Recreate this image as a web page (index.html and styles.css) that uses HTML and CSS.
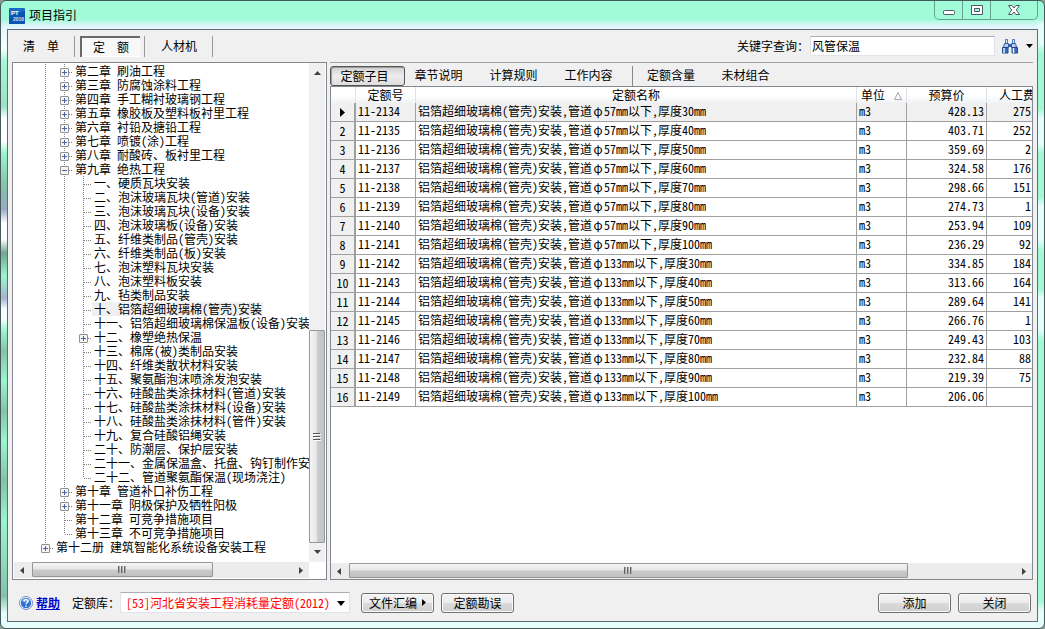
FILE: index.html
```
<!DOCTYPE html>
<html lang="zh-CN">
<head>
<meta charset="utf-8">
<title>项目指引</title>
<link rel="stylesheet" href="styles.css">
</head>
<body>
<div class="window">
  <header class="titlebar">
    <svg class="app-icon" width="16" height="16" viewBox="0 0 16 16" aria-hidden="true">
      <rect width="16" height="16" rx="1" fill="#1769c4"/>
      <path d="M0 16V8L16 3V15a1 1 0 0 1-1 1Z" fill="#0c55ae"/>
      <text x="2" y="7" class="icon-pt">PT</text>
      <text x="4" y="13" class="icon-year">2016</text>
    </svg>
    <h1>项目指引</h1>
    <div class="window-buttons">
      <button type="button" aria-label="最小化"><svg width="14" height="14" viewBox="0 0 14 14"><rect x="1.500" y="7.500" width="11" height="4" rx="1" fill="#fff" stroke="#535666"/></svg></button>
      <button type="button" aria-label="最大化"><svg width="14" height="14" viewBox="0 0 14 14"><path d="M1.500 2.500h11v9h-11ZM4.500 5.500h5v3h-5Z" fill="#fff" fill-rule="evenodd" stroke="#535666"/></svg></button>
      <button type="button" class="close" aria-label="关闭窗口"><svg width="14" height="14" viewBox="0 0 14 14"><path d="M1.500 2.500h3.500l2 2.500 2-2.500h3.500l-3.200 4.500 3.200 4.500H9L7 9l-2 2.500H1.500L4.700 7Z" fill="#fff" stroke="#535666"/></svg></button>
    </div>
  </header>

  <main class="client">
    <div class="toolbar">
      <nav class="modes">
        <button type="button" class="mode">清&emsp;&emsp;单</button>
        <button type="button" class="mode pressed">定&emsp;&emsp;额</button>
        <button type="button" class="mode">人材机</button>
      </nav>
      <form class="search">
        <label for="keyword">关键字查询：</label>
        <input id="keyword" type="text" value="风管保温">
        <button type="button" class="find" aria-label="查询">
          <svg width="16" height="15" viewBox="0 0 16 15"><path d="M3.500.5h2v4h-2ZM10.500.5h2v4h-2Z" fill="#d8e6fa" stroke="#4d7cc0"/><path d="M2.500 4.500h4v4h-5ZM9.500 4.500h4l1 4h-5Z" fill="#b5cef2" stroke="#2f5da8"/><path d="M6 5h4v3H6Z" fill="#2f5da8"/><path d="M.5 8.500h5.500v5.500H.5ZM10 8.500h5.500v5.500H10Z" fill="#3a6cba" stroke="#1f4388"/><path d="M2 9v5M11.500 9v5" stroke="#e8f1ff" stroke-width="1.500"/></svg>
          <svg width="7" height="4" viewBox="0 0 7 4"><path d="M0 0h7L3.500 4Z"/></svg>
        </button>
      </form>
    </div>

    <div class="panes">
      <section class="tree-pane">
        <div class="tree-body">
          <ul class="tree">
            <li>
              <ul>
                <li><div class="row"><button type="button" class="knob plus" aria-label="展开"></button><span>第二章 刷油工程</span></div></li>
                <li><div class="row"><button type="button" class="knob plus" aria-label="展开"></button><span>第三章 防腐蚀涂料工程</span></div></li>
                <li><div class="row"><button type="button" class="knob plus" aria-label="展开"></button><span>第四章 手工糊衬玻璃钢工程</span></div></li>
                <li><div class="row"><button type="button" class="knob plus" aria-label="展开"></button><span>第五章 橡胶板及塑料板衬里工程</span></div></li>
                <li><div class="row"><button type="button" class="knob plus" aria-label="展开"></button><span>第六章 衬铅及搪铅工程</span></div></li>
                <li><div class="row"><button type="button" class="knob plus" aria-label="展开"></button><span>第七章 喷镀(涂)工程</span></div></li>
                <li><div class="row"><button type="button" class="knob plus" aria-label="展开"></button><span>第八章 耐酸砖、板衬里工程</span></div></li>
                <li><div class="row"><button type="button" class="knob" aria-label="折叠"></button><span>第九章 绝热工程</span></div>
                  <ul>
                    <li><div class="row"><span>一、硬质瓦块安装</span></div></li>
                    <li><div class="row"><span>二、泡沫玻璃瓦块(管道)安装</span></div></li>
                    <li><div class="row"><span>三、泡沫玻璃瓦块(设备)安装</span></div></li>
                    <li><div class="row"><span>四、泡沫玻璃板(设备)安装</span></div></li>
                    <li><div class="row"><span>五、纤维类制品(管壳)安装</span></div></li>
                    <li><div class="row"><span>六、纤维类制品(板)安装</span></div></li>
                    <li><div class="row"><span>七、泡沫塑料瓦块安装</span></div></li>
                    <li><div class="row"><span>八、泡沫塑料板安装</span></div></li>
                    <li><div class="row"><span>九、毡类制品安装</span></div></li>
                    <li><div class="row"><span class="selected">十、铝箔超细玻璃棉(管壳)安装</span></div></li>
                    <li><div class="row"><span>十一、铝箔超细玻璃棉保温板(设备)安装</span></div></li>
                    <li><div class="row"><button type="button" class="knob plus" aria-label="展开"></button><span>十二、橡塑绝热保温</span></div></li>
                    <li><div class="row"><span>十三、棉席(被)类制品安装</span></div></li>
                    <li><div class="row"><span>十四、纤维类散状材料安装</span></div></li>
                    <li><div class="row"><span>十五、聚氨酯泡沫喷涂发泡安装</span></div></li>
                    <li><div class="row"><span>十六、硅酸盐类涂抹材料(管道)安装</span></div></li>
                    <li><div class="row"><span>十七、硅酸盐类涂抹材料(设备)安装</span></div></li>
                    <li><div class="row"><span>十八、硅酸盐类涂抹材料(管件)安装</span></div></li>
                    <li><div class="row"><span>十九、复合硅酸铝绳安装</span></div></li>
                    <li><div class="row"><span>二十、防潮层、保护层安装</span></div></li>
                    <li><div class="row"><span>二十一、金属保温盒、托盘、钩钉制作安装</span></div></li>
                    <li><div class="row"><span>二十二、管道聚氨酯保温(现场浇注)</span></div></li>
                  </ul>
                </li>
                <li><div class="row"><button type="button" class="knob plus" aria-label="展开"></button><span>第十章 管道补口补伤工程</span></div></li>
                <li><div class="row"><button type="button" class="knob plus" aria-label="展开"></button><span>第十一章 阴极保护及牺牲阳极</span></div></li>
                <li><div class="row"><span>第十二章 可竞争措施项目</span></div></li>
                <li><div class="row"><span>第十三章 不可竞争措施项目</span></div></li>
              </ul>
            </li>
            <li><div class="row"><button type="button" class="knob plus" aria-label="展开"></button><span>第十二册 建筑智能化系统设备安装工程</span></div></li>
          </ul>
          <div class="vscroll">
            <svg width="7" height="4" viewBox="0 0 7 4"><path d="M0 4h7L3.500 0Z" fill="#404040"/></svg>
            <div class="vtrack"><div class="vthumb"><svg width="8" height="8" viewBox="0 0 8 8"><path d="M0 .5h7M0 3.500h7M0 6.500h7" stroke="#555"/><path d="M1 1.500h7M1 4.500h7M1 7.500h7" stroke="#fff"/></svg></div></div>
            <svg width="7" height="4" viewBox="0 0 7 4"><path d="M0 0h7L3.500 4Z" fill="#404040"/></svg>
          </div>
        </div>
        <div class="hscroll inset">
          <svg width="4" height="7" viewBox="0 0 4 7"><path d="M4 0v7L0 3.500Z" fill="#404040"/></svg>
          <div class="htrack"><div class="hthumb tree-thumb"><svg width="9" height="7" viewBox="0 0 9 7"><path d="M.5 0v7M3.500 0v7M6.500 0v7" stroke="#666"/><path d="M1.500 0v7M4.500 0v7M7.500 0v7" stroke="#aaa"/></svg></div></div>
          <svg width="4" height="7" viewBox="0 0 4 7"><path d="M0 0v7L4 3.500Z" fill="#404040"/></svg>
        </div>
      </section>

      <section class="detail">
        <nav class="tabs">
          <button type="button" class="tab active">定额子目</button>
          <button type="button" class="tab">章节说明</button>
          <button type="button" class="tab">计算规则</button>
          <button type="button" class="tab">工作内容</button>
          <button type="button" class="tab divided">定额含量</button>
          <button type="button" class="tab">未材组合</button>
        </nav>
        <div class="grid">
          <div class="grid-body">
            <table>
              <colgroup><col class="c-index"><col class="c-code"><col><col class="c-unit"><col class="c-price"><col class="c-labor"></colgroup>
              <thead><tr><th></th><th>定额号</th><th>定额名称</th><th class="sorted">单位<svg width="8" height="8" viewBox="0 0 8 8"><path d="M.5 7.500h7L4 .5Z" fill="none" stroke="#aaa"/></svg></th><th>预算价</th><th class="cut">人工费</th></tr></thead>
              <tbody>
                <tr class="current"><th><svg width="5" height="9" viewBox="0 0 5 9"><path d="M0 0v9L5 4.500Z"/></svg></th><td>11-2134</td><td>铝箔超细玻璃棉(管壳)安装,管道<span class="dia">φ</span>57mm以下,厚度30mm</td><td>m3</td><td>428.13</td><td>275</td></tr>
                <tr><th>2</th><td>11-2135</td><td>铝箔超细玻璃棉(管壳)安装,管道<span class="dia">φ</span>57mm以下,厚度40mm</td><td>m3</td><td>403.71</td><td>252</td></tr>
                <tr><th>3</th><td>11-2136</td><td>铝箔超细玻璃棉(管壳)安装,管道<span class="dia">φ</span>57mm以下,厚度50mm</td><td>m3</td><td>359.69</td><td>2</td></tr>
                <tr><th>4</th><td>11-2137</td><td>铝箔超细玻璃棉(管壳)安装,管道<span class="dia">φ</span>57mm以下,厚度60mm</td><td>m3</td><td>324.58</td><td>176</td></tr>
                <tr><th>5</th><td>11-2138</td><td>铝箔超细玻璃棉(管壳)安装,管道<span class="dia">φ</span>57mm以下,厚度70mm</td><td>m3</td><td>298.66</td><td>151</td></tr>
                <tr><th>6</th><td>11-2139</td><td>铝箔超细玻璃棉(管壳)安装,管道<span class="dia">φ</span>57mm以下,厚度80mm</td><td>m3</td><td>274.73</td><td>1</td></tr>
                <tr><th>7</th><td>11-2140</td><td>铝箔超细玻璃棉(管壳)安装,管道<span class="dia">φ</span>57mm以下,厚度90mm</td><td>m3</td><td>253.94</td><td>109</td></tr>
                <tr><th>8</th><td>11-2141</td><td>铝箔超细玻璃棉(管壳)安装,管道<span class="dia">φ</span>57mm以下,厚度100mm</td><td>m3</td><td>236.29</td><td>92</td></tr>
                <tr><th>9</th><td>11-2142</td><td>铝箔超细玻璃棉(管壳)安装,管道<span class="dia">φ</span>133mm以下,厚度30mm</td><td>m3</td><td>334.85</td><td>184</td></tr>
                <tr><th>10</th><td>11-2143</td><td>铝箔超细玻璃棉(管壳)安装,管道<span class="dia">φ</span>133mm以下,厚度40mm</td><td>m3</td><td>313.66</td><td>164</td></tr>
                <tr><th>11</th><td>11-2144</td><td>铝箔超细玻璃棉(管壳)安装,管道<span class="dia">φ</span>133mm以下,厚度50mm</td><td>m3</td><td>289.64</td><td>141</td></tr>
                <tr><th>12</th><td>11-2145</td><td>铝箔超细玻璃棉(管壳)安装,管道<span class="dia">φ</span>133mm以下,厚度60mm</td><td>m3</td><td>266.76</td><td>1</td></tr>
                <tr><th>13</th><td>11-2146</td><td>铝箔超细玻璃棉(管壳)安装,管道<span class="dia">φ</span>133mm以下,厚度70mm</td><td>m3</td><td>249.43</td><td>103</td></tr>
                <tr><th>14</th><td>11-2147</td><td>铝箔超细玻璃棉(管壳)安装,管道<span class="dia">φ</span>133mm以下,厚度80mm</td><td>m3</td><td>232.84</td><td>88</td></tr>
                <tr><th>15</th><td>11-2148</td><td>铝箔超细玻璃棉(管壳)安装,管道<span class="dia">φ</span>133mm以下,厚度90mm</td><td>m3</td><td>219.39</td><td>75</td></tr>
                <tr><th>16</th><td>11-2149</td><td>铝箔超细玻璃棉(管壳)安装,管道<span class="dia">φ</span>133mm以下,厚度100mm</td><td>m3</td><td>206.06</td><td></td></tr>
              </tbody>
            </table>
          </div>
          <div class="hscroll">
            <svg width="4" height="7" viewBox="0 0 4 7"><path d="M4 0v7L0 3.500Z" fill="#404040"/></svg>
            <div class="htrack"><div class="hthumb grid-thumb"><svg width="9" height="7" viewBox="0 0 9 7"><path d="M.5 0v7M3.500 0v7M6.500 0v7" stroke="#666"/><path d="M1.500 0v7M4.500 0v7M7.500 0v7" stroke="#aaa"/></svg></div></div>
            <svg width="4" height="7" viewBox="0 0 4 7"><path d="M0 0v7L4 3.500Z" fill="#404040"/></svg>
          </div>
        </div>
      </section>
    </div>

    <footer class="footer">
      <a class="help" href="#help"><svg width="14" height="14" viewBox="0 0 14 14"><circle cx="7" cy="7" r="6.500" fill="#fff" stroke="#6f8fc4"/><circle cx="7" cy="7" r="5.200" fill="#2f6fd6"/><path d="M3 5a4.300 4.300 0 0 1 8 0Q7 7.500 3 5" fill="#6fa2ee"/><path d="M5 5.500C5 3 9 3 9 5.300 9 6.700 7 6.700 7 8.300M7 9.600V11" fill="none" stroke="#fff" stroke-width="1.400"/></svg><span>帮助</span></a>
      <label for="library">定额库：</label>
      <div class="library">
        <select id="library"><option>[53]河北省安装工程消耗量定额(2012)</option></select>
        <svg width="8" height="5" viewBox="0 0 8 5"><path d="M0 0h8L4 5Z"/></svg>
      </div>
      <button type="button" class="push first">文件汇编<svg width="4" height="7" viewBox="0 0 4 7"><path d="M0 0v7L4 3.500Z"/></svg></button>
      <button type="button" class="push">定额勘误</button>
      <button type="button" class="push right">添加</button>
      <button type="button" class="push">关闭</button>
    </footer>
  </main>
</div>
</body>
</html>
```
FILE: styles.css
```
* { box-sizing: border-box; }
html, body { height: 100%; }
body {
  margin: 0;
  background: #8a9c96;
  color: #000;
  font: 12px/14px "Noto Sans CJK SC", sans-serif;
  font-feature-settings: "hwid";
}
button, input, select {
  font: inherit;
  font-feature-settings: inherit;
  color: inherit;
  margin: 0;
  padding: 0;
  border: 0;
  background: none;
  border-radius: 0;
}
svg { display: block; flex: none; }
ul { list-style: none; margin: 0; padding: 0; }

.window {
  height: 100%;
  display: flex;
  flex-direction: column;
  padding: 0 6px 6px;
  border: 1px solid #46585a;
  border-radius: 6px;
  overflow: hidden;
  background:
    linear-gradient(transparent 0 18px, #e6fdfd 26px 42px, #a4f8d4 52px 108px, #e6fdfd 117px 143px, #a4f8d4 152px 196px, #e6fdfd 205px 238px, #a4f8d4 250px 288px, #e6fdfd 297px 328px, #a4f8d4 340px 600px, #e6fdfd 610px) right / 7px 100% no-repeat,
    linear-gradient(#a0fbd8 0 18px, #e6f6ff 26px, #f4fffd 48px, #a4f8d4 60px, #98e4c4 105px, #fff 118px 140px, #98f7cc 152px, #83c3a8 185px, #9aa8c4 208px, #fff 222px 238px, #6fa88f 252px, #98f7cc 275px, #a5b3d0 297px, #f4ffff 308px 318px, #98f7cc 330px, #83c3a8 350px, #98f7cc 380px, #83c3a8 410px, #98f7cc 440px, #83c3a8 480px, #98f7cc 520px, #83c3a8 595px, #e6fdfd 612px);
}
.titlebar {
  height: 28px;
  flex: none;
  display: flex;
  align-items: flex-start;
}
.app-icon { margin: 7px 4px 0 2px; }
.icon-pt { font: bold 6px "Liberation Sans", sans-serif; fill: #fff; }
.icon-year { font: bold 5px "Liberation Sans", sans-serif; fill: #cfe3ff; }
.titlebar h1 { margin: 7px 0 0; font-size: 12px; line-height: 14px; font-weight: normal; }
.window-buttons {
  margin-left: auto;
  display: flex;
  height: 19px;
  border: 1px solid #68a08d;
  border-top: 0;
  border-radius: 0 0 5px 5px;
}
.window-buttons button {
  width: 28px;
  display: grid;
  place-items: center;
  border-right: 1px solid #68a08d;
}
.window-buttons .close { width: 46px; border-right: 0; }

.client {
  flex: 1;
  min-height: 0;
  display: flex;
  flex-direction: column;
  background: #f0f0f0;
  border: 1px solid #606b72;
  padding: 0 4px;
}
.toolbar {
  height: 32px;
  flex: none;
  display: flex;
  align-items: center;
  justify-content: space-between;
}
.modes { display: flex; gap: 10px; }
.mode {
  width: 58px;
  height: 21px;
  padding-bottom: 1px;
  position: relative;
}
.mode::after {
  content: "";
  position: absolute;
  top: 0;
  bottom: 0;
  right: -5px;
  border-left: 1px solid #999;
}
.pressed {
  width: 60px;
  padding: 1px 0 0 2px;
  background: #f8f8f8;
  box-shadow: inset 2px 2px #696969, inset -1px -1px #fff;
}
.search { display: flex; align-items: center; }
.search input {
  width: 185px;
  height: 20px;
  margin: 0 7px 0 1px;
  padding: 0 1px 2px;
  background: #fff;
  border: 1px solid #e2e3ea;
  border-top-color: #abadb3;
}
.find { display: flex; align-items: center; gap: 8px; }

.panes { flex: 1; min-height: 0; display: flex; gap: 3px; }
.tree-pane {
  width: 315px;
  flex: none;
  display: flex;
  flex-direction: column;
  border: 1px solid #828790;
  background: #fff;
}
.tree-body { flex: 1; min-height: 0; display: flex; }
.tree { flex: 1; min-width: 0; overflow: hidden; padding: 1px 0 0 25px; white-space: nowrap; }
.tree li {
  background: repeating-linear-gradient(#808080 0 1px, transparent 1px 2px) 7px 0 / 1px 100% no-repeat;
}
.tree li:last-child { background-size: 1px 8px; }
.tree ul { padding-left: 19px; }
.row {
  height: 14px;
  display: flex;
  align-items: center;
  padding-left: 16px;
  background: repeating-linear-gradient(90deg, #808080 0 1px, transparent 1px 2px) 8px 8px / 8px 1px no-repeat;
}
.row span { padding: 0 1px 0 2px; }
.selected { background: #f0f0f0; }
.knob {
  flex: none;
  width: 9px;
  height: 9px;
  margin: 2px 4px 0 -13px;
  border: 1px solid #919191;
  border-radius: 1px;
  background: linear-gradient(#4b63a7, #4b63a7) center / 5px 1px no-repeat, #f6f6f6;
}
.knob.plus {
  background: linear-gradient(#4b63a7, #4b63a7) center / 5px 1px no-repeat, linear-gradient(#4b63a7, #4b63a7) center / 1px 5px no-repeat, #f6f6f6;
}
.vscroll {
  width: 16px;
  margin-right: 1px;
  flex: none;
  display: flex;
  flex-direction: column;
  align-items: center;
  padding: 8px 0;
  background: #f0f0f0;
}
.vtrack {
  flex: 1;
  width: 100%;
  display: flex;
  flex-direction: column;
  justify-content: flex-end;
  padding: 5px 0 7px;
}
.vthumb {
  height: 46%;
  display: grid;
  place-items: center;
  border: 1px solid #979797;
  border-radius: 1px;
  background: linear-gradient(90deg, #f5f5f5, #e6e7e9 45%, #c8ccd0 55%, #bfc4c9);
}
.hscroll {
  height: 16px;
  flex: none;
  display: flex;
  align-items: center;
  padding: 0 6px;
  background: #ececec;
}
.hscroll.inset { margin: 0 17px 1px 1px; }
.htrack { flex: 1; height: 100%; padding: 0 8px; }
.hthumb {
  height: 15px;
  display: grid;
  place-items: center;
  border: 1px solid #979797;
  border-radius: 1px;
  background: linear-gradient(#f5f5f5, #e6e6e6 45%, #cbcbcb 55%, #c0c0c0);
}
.tree-thumb { width: 70%; }
.grid-thumb { width: 84%; }

.detail {
  flex: 1;
  min-width: 0;
  display: flex;
  flex-direction: column;
  border-top: 1px solid #a0a0a0;
}
.tabs { height: 23px; flex: none; display: flex; align-items: center; padding-top: 2px; }
.tab { width: 75px; height: 20px; padding: 0 8px 1px 0; }
.tab.active {
  padding: 0 6px 0 0;
  border: 1px solid #555;
  border-radius: 3px;
  background: linear-gradient(#d2d2d2, #ededed 50%, #dedede);
  box-shadow: inset 1px 1px 1px #999;
}
.tab.divided { margin-left: 2px; width: 80px; border-left: 1px solid #888; padding: 0 3px 1px 0; }
.grid {
  flex: 1;
  min-height: 0;
  display: flex;
  flex-direction: column;
  border: 1px solid #828790;
  background: #fff;
}
.grid-body { flex: 1; min-height: 0; overflow: hidden; }
table { width: 100%; table-layout: fixed; border-collapse: separate; border-spacing: 0; }
.c-index { width: 25px; }
.c-code { width: 60px; }
.c-unit { width: 50px; }
.c-price { width: 80px; }
.c-labor { width: 45px; }
th, td { padding: 0 2px; font-weight: normal; white-space: nowrap; overflow: hidden; }
thead th {
  height: 16px;
  border-right: 1px solid #dfe2e6;
  background: linear-gradient(#fff 50%, #f0f2f4);
}
thead .sorted { text-align: left; padding-left: 4px; }
.sorted svg { display: inline-block; margin-left: 9px; }
thead .cut { padding-left: 12px; text-align: left; }
tbody th, td {
  height: 19px;
  line-height: 16px;
  padding-bottom: 2px;
  border-right: 1px solid #a0a0a0;
  border-bottom: 1px solid #a0a0a0;
}
tbody th { background: #f0f0f0; border-right-width: 2px; padding-top: 1px; padding-bottom: 1px; }
tbody th svg { margin: 0 auto; }
tr.current td { background: #f0f0f0; }
td:nth-child(n+5) { text-align: right; }
td:last-child { padding-right: 1px; }
tr > :last-child { border-right: 0; }
.dia { display: inline-block; width: 12px; text-align: center; }

.footer {
  height: 41px;
  flex: none;
  display: flex;
  align-items: center;
  padding: 4px 2px 0 7px;
}
.help { display: flex; align-items: center; gap: 3px; color: #0000c8; font-weight: bold; margin-right: 12px; }
.library { position: relative; width: 230px; margin-right: 11px; }
.library select {
  appearance: none;
  display: block;
  width: 100%;
  height: 21px;
  padding-left: 5px;
  color: #f00;
  background: #fff;
  border: 1px solid #e2e3ea;
  border-top-color: #abadb3;
}
.library svg { position: absolute; right: 5px; top: 9px; pointer-events: none; }
.push {
  width: 73px;
  height: 20px;
  display: flex;
  align-items: center;
  justify-content: center;
  gap: 5px;
  margin-left: 7px;
  border: 1px solid #707070;
  border-radius: 3px;
  background: linear-gradient(#f4f4f4, #ebebeb 50%, #dadada 52%, #cfcfcf);
  box-shadow: inset 0 0 0 1px #fafafa;
}
.push.first { margin-left: 0; }
.push.right { margin-left: auto; }
```
